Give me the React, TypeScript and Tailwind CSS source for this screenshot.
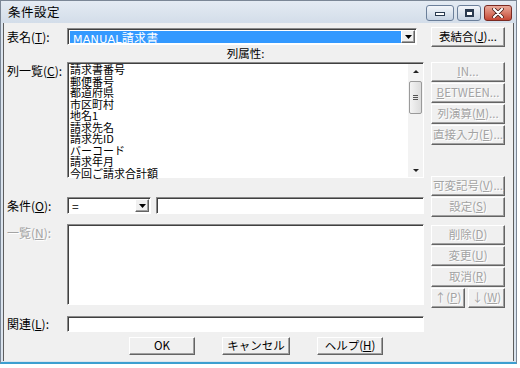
import type { ReactNode } from 'react';

const jp = { fontFamily: '"Noto Sans CJK JP", "Noto Sans", sans-serif' };

function Btn({
  children,
  disabled,
  className = '',
}: {
  children: ReactNode;
  disabled?: boolean;
  className?: string;
}) {
  return (
    <div
      className={`flex items-center justify-center border border-t-white border-l-white border-r-[#646464] border-b-[#646464] bg-[#f0f0f0] shadow-[inset_-1px_-1px_0_#a0a0a0] text-[11.5px] leading-none whitespace-nowrap ${
        disabled ? 'text-[#a3a3a3] [text-shadow:1px_1px_0_#ffffff]' : 'text-black'
      } ${className}`}
    >
      {children}
    </div>
  );
}

function Sunken({ children, className = '' }: { children?: ReactNode; className?: string }) {
  return (
    <div
      className={`border border-t-[#8a8a8a] border-l-[#8a8a8a] border-r-white border-b-white shadow-[inset_1px_1px_0_#404040] bg-white ${className}`}
    >
      {children}
    </div>
  );
}

function DropArrow() {
  return (
    <div className="w-[14px] h-full flex items-center justify-center border border-t-white border-l-white border-r-[#646464] border-b-[#646464] bg-[#f0f0f0] shadow-[inset_-1px_-1px_0_#a0a0a0]">
      <svg width="7" height="4" viewBox="0 0 7 4">
        <path d="M0 0h7L3.5 4z" fill="#000" />
      </svg>
    </div>
  );
}

const columns = [
  '請求書番号',
  '郵便番号',
  '都道府県',
  '市区町村',
  '地名1',
  '請求先名',
  '請求先ID',
  'バーコード',
  '請求年月',
  '今回ご請求合計額',
];

export default function App() {
  return (
    <div className="w-[520px] h-[368px] bg-white text-[12px] text-black" style={jp}>
      <div className="w-[517px] h-[364px] flex flex-col bg-[#dbe4ee] border border-[#7b8796] border-b-2 border-b-[#3d9fd0]">
        {/* title bar */}
        <div className="h-[22px] flex items-start justify-between bg-gradient-to-b from-[#e4ebf3] to-[#d3dde9]">
          <div className="pl-[7px] pt-[3px] text-[12.5px] leading-[15px] tracking-[0.5px]">条件設定</div>
          <div className="flex gap-[3px] pt-[4px] pr-[4px]">
            <div className="w-[28px] h-[16px] rounded-[3px] border border-[#6b7f9a] bg-gradient-to-b from-[#f3f6fa] to-[#c6d3e3] flex items-center justify-center pt-[2px]">
              <div className="w-[10px] h-[4px] bg-white border border-[#2a3a50]" />
            </div>
            <div className="w-[24px] h-[16px] rounded-[3px] border border-[#6b7f9a] bg-gradient-to-b from-[#f3f6fa] to-[#c6d3e3] flex items-center justify-center">
              <div className="w-[9px] h-[8px] bg-white border-[2px] border-[#2a3a50] border-t-[3px]" />
            </div>
            <div className="w-[28px] h-[16px] rounded-[3px] border border-[#7a2a22] bg-gradient-to-b from-[#e9a99a] to-[#c44634] flex items-center justify-center">
              <svg width="12" height="10" viewBox="0 0 12 10">
                <path d="M2 1l8 8M10 1l-8 8" stroke="#3b1510" strokeWidth="3.6" strokeLinecap="round" />
                <path d="M2 1l8 8M10 1l-8 8" stroke="#fff" strokeWidth="2.2" strokeLinecap="round" />
              </svg>
            </div>
          </div>
        </div>

        {/* client area */}
        <div className="flex-1 mx-[2px] mb-[1px] bg-[#f0f0f0] border-l border-r border-[#5e5e5e] flex">
          {/* left part */}
          <div className="w-[420px] flex flex-col">
            <div className="flex mt-[5px] h-[17px]">
              <div className="w-[63px] pl-[3px] leading-[17px]">
                表名(<u>T</u>):
              </div>
              <Sunken className="w-[350px] h-[17px] flex p-[1px]">
                <div className="flex-1 bg-[#3399ff] text-white text-[12px] leading-[14px] pl-[3px] tracking-[0.3px] ml-[1px] mt-[1px]">
                  <span style={{ fontFamily: '"DejaVu Sans", sans-serif' }} className="text-[11px]">
                    MANUAL
                  </span>
                  請求書
                </div>
                <DropArrow />
              </Sunken>
            </div>

            <div className="ml-[63px] w-[357px] h-[17px] flex items-center justify-center text-[11.5px]">列属性:</div>

            <div className="flex h-[116px]">
              <div className="w-[63px] pl-[3px] pt-[2px] leading-[14px]">
                列一覧(<u>C</u>):
              </div>
              <Sunken className="w-[357px] h-[116px] flex">
                <div className="flex-1 pl-[2px] pt-[1px] text-[11px] leading-[11.5px]">
                  {columns.map((c) => (
                    <div key={c} className="h-[11.5px]">
                      {c}
                    </div>
                  ))}
                </div>
                <div className="w-[15px] flex flex-col items-center bg-[#f3f3f3] mt-[1px]">
                  <div className="h-[14px] flex items-center justify-center">
                    <svg width="6" height="3" viewBox="0 0 6 3">
                      <path d="M0 3h6L3 0z" fill="#222" />
                    </svg>
                  </div>
                  <div className="mt-[3px] w-[13px] h-[33px] rounded-[2px] border border-[#9a9a9a] bg-gradient-to-r from-[#f4f4f4] to-[#dcdcdc] flex flex-col items-center justify-center gap-[1px]">
                    <div className="w-[5px] h-[1px] bg-[#555]" />
                    <div className="w-[5px] h-[1px] bg-[#555]" />
                    <div className="w-[5px] h-[1px] bg-[#555]" />
                  </div>
                  <div className="flex-1" />
                  <div className="h-[14px] flex items-center justify-center">
                    <svg width="6" height="3" viewBox="0 0 6 3">
                      <path d="M0 0h6L3 3z" fill="#222" />
                    </svg>
                  </div>
                </div>
              </Sunken>
            </div>

            <div className="flex mt-[19px] h-[17px]">
              <div className="w-[63px] pl-[3px] leading-[17px]">
                条件(<u>O</u>):
              </div>
              <Sunken className="w-[84px] h-[17px] flex p-[1px]">
                <div className="flex-1 pl-[3px] text-[12px] leading-[13px]">=</div>
                <DropArrow />
              </Sunken>
              <Sunken className="ml-[5px] w-[268px] h-[17px]" />
            </div>

            <div className="flex mt-[10px] h-[81px]">
              <div className="w-[63px] pl-[3px] pt-[2px] leading-[14px] text-[#a3a3a3] [text-shadow:1px_1px_0_#ffffff]">
                一覧(<u>N</u>):
              </div>
              <Sunken className="w-[357px] h-[81px]" />
            </div>

            <div className="flex mt-[11px] h-[16px]">
              <div className="w-[63px] pl-[3px] leading-[16px]">
                関連(<u>L</u>):
              </div>
              <Sunken className="w-[357px] h-[16px]" />
            </div>

            <div className="flex mt-[5px] ml-[125px] gap-[27px]">
              <Btn className="w-[66px] h-[18px]">OK</Btn>
              <Btn className="w-[68px] h-[18px]">キャンセル</Btn>
              <Btn className="w-[66px] h-[18px]">
                ヘルプ(<u>H</u>)
              </Btn>
            </div>
          </div>

          {/* right buttons */}
          <div className="ml-[7px] w-[74px] flex flex-col gap-[1px]">
            <Btn className="mt-[4px] h-[20px]">
              表結合(<u>J</u>)...
            </Btn>
            <Btn disabled className="mt-[14px] h-[20px]">
              <u>I</u>N...
            </Btn>
            <Btn disabled className="h-[20px]">
              <u>B</u>ETWEEN...
            </Btn>
            <Btn disabled className="h-[20px]">
              列演算(<u>M</u>)...
            </Btn>
            <Btn disabled className="h-[20px]">
              直接入力(<u>E</u>)...
            </Btn>
            <Btn disabled className="mt-[30px] h-[20px]">
              可変記号(<u>V</u>)...
            </Btn>
            <Btn disabled className="h-[20px]">
              設定(<u>S</u>)
            </Btn>
            <Btn disabled className="mt-[7px] h-[20px]">
              削除(<u>D</u>)
            </Btn>
            <Btn disabled className="h-[20px]">
              変更(<u>U</u>)
            </Btn>
            <Btn disabled className="h-[20px]">
              取消(<u>R</u>)
            </Btn>
            <div className="flex gap-[3px]">
              <Btn disabled className="w-[34px] h-[20px]">
                ↑(<u>P</u>)
              </Btn>
              <Btn disabled className="w-[37px] h-[20px]">
                ↓(<u>W</u>)
              </Btn>
            </div>
          </div>
        </div>
      </div>
    </div>
  );
}
